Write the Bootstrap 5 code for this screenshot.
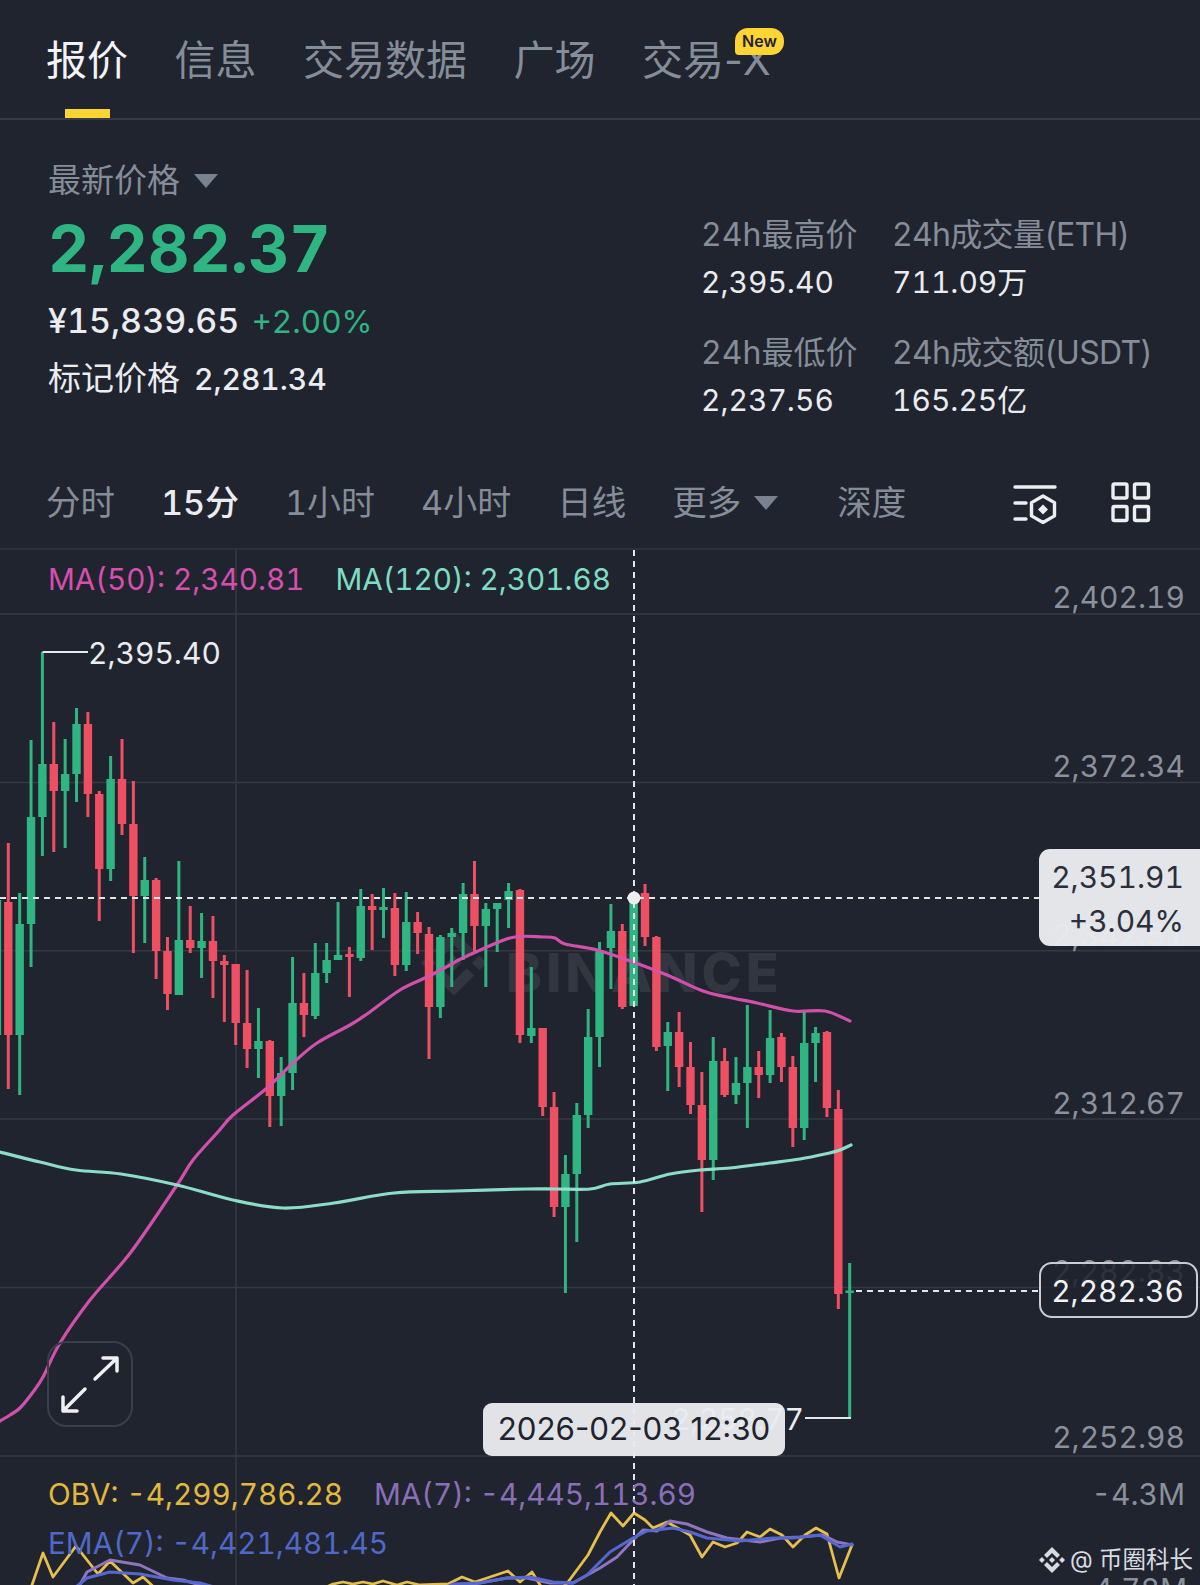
<!DOCTYPE html>
<html lang="zh-CN">
<head>
<meta charset="utf-8">
<title>ETH 报价</title>
<link href="https://cdn.jsdelivr.net/npm/bootstrap@5.3.0/dist/css/bootstrap.min.css" rel="stylesheet">
<style>
:root{--bgd:#20242e;--gr:#858d99;--wh:#eaecef;--up:#2fb582;--dn:#ef4f62;--yl:#fcd535;}
html,body{margin:0;background:var(--bgd);}
body{font-family:Inter,"Noto Sans CJK SC",sans-serif;color:var(--wh);font-variant-numeric:tabular-nums;}
.phone{width:1200px;height:1585px;overflow:hidden;background:var(--bgd);}
.tabbar{height:120px;padding-left:46px;gap:46.500px;border-bottom:2px solid #353a45;}
.tabitem{font-size:41px;line-height:48px;color:var(--gr);position:relative;margin-top:36px;height:48px;font-variant-numeric:normal;white-space:nowrap;}
.tabitem.on{color:#f2f3f5;}
.tabitem.on::after{content:"";position:absolute;left:19px;width:45px;height:9px;top:73px;background:var(--yl);}
.newtag{position:absolute;left:93px;top:-8px;width:49px;height:27px;border-radius:13px 13px 13px 4px;background:var(--yl);color:#1f232e;font-size:16px;font-weight:600;line-height:27px;text-align:center;}
.stats{height:337px;padding-left:48px;padding-right:40px;}
.lab{font-size:32px;line-height:40px;color:var(--gr);white-space:nowrap;}
.lab.big{font-size:33px;}
.lab.tight{letter-spacing:-.7px;}
.val{font-size:30px;line-height:40px;color:var(--wh);font-weight:400;margin-top:7px;}
.hero{font-size:64px;line-height:70px;font-weight:700;color:var(--up);margin-top:14px;}
.fiat{margin-top:17px;font-size:34px;line-height:40px;font-weight:500;white-space:nowrap;}
.pct{color:var(--up);font-weight:400;margin-left:12px;font-size:31.500px;}
.markline{margin-top:16px;font-size:33px;line-height:40px;white-space:nowrap;}
.markline .num{font-size:30px;font-weight:500;margin-left:14px;}
.caret{display:inline-block;width:0;height:0;border-left:12px solid transparent;border-right:12px solid transparent;border-top:14px solid #798290;margin-left:14px;vertical-align:4px;}
.rightbox{padding-top:95px;margin-left:auto;width:459px;}
.c1{width:191px;}
.gaprow{margin-top:31px;}
.frames{height:93px;padding-left:46px;padding-right:49px;gap:46px;border-bottom:2px solid #2c313b;font-size:34.500px;color:var(--gr);white-space:nowrap;}
.frames .on{color:var(--wh);font-weight:500;font-size:34px;}
.frames .dig{font-size:34px;}
.frames .more{margin-left:13px;}
.frames .caret{margin-left:13px;vertical-align:5px;}
.chartbox{position:relative;height:1035px;overflow:hidden;}
#plot{position:absolute;left:0;top:0;display:block;}
.legend{position:absolute;left:48px;font-size:29.700px;line-height:40px;white-space:nowrap;gap:31px;}
.pricetip{position:absolute;left:1039px;top:299px;width:175px;height:97px;background:rgba(233,235,238,.97);border-radius:11px;color:#2a2f3a;font-size:30px;line-height:44px;padding:6px 30px 0 0;text-align:right;}
.lasttip{position:absolute;left:1039px;top:712px;width:159px;height:56px;border:2px solid #c9cdd3;border-radius:13px;background:rgba(31,35,46,.86);color:#f1f2f4;font-size:30px;line-height:54px;text-align:right;padding-right:12px;}
.timetip{position:absolute;left:483px;top:853px;width:302px;height:53px;background:rgba(233,235,238,.96);border-radius:9px;color:#1f232e;font-size:31.300px;line-height:53px;text-align:center;white-space:nowrap;font-variant-numeric:normal;}
.zoombtn{position:absolute;left:47px;top:791px;width:86px;height:86px;border:2px solid #393f4a;border-radius:20px;}
.signoff{position:absolute;left:1039px;top:995px;font-size:23.500px;line-height:30px;color:#d8dbe0;gap:5px;white-space:nowrap;}
</style>
</head>
<body>
<div class="phone d-flex flex-column">
  <div class="tabbar d-flex flex-shrink-0">
    <div class="tabitem on">报价</div>
    <div class="tabitem">信息</div>
    <div class="tabitem">交易数据</div>
    <div class="tabitem">广场</div>
    <div class="tabitem">交易-X<span class="newtag">New</span></div>
  </div>

  <div class="stats d-flex flex-shrink-0">
    <div>
      <div class="lab big" style="margin-top:40px">最新价格<span class="caret"></span></div>
      <div class="hero">2,282.37</div>
      <div class="fiat">¥15,839.65<span class="pct">+2.00%</span></div>
      <div class="markline">标记价格<span class="num">2,281.34</span></div>
    </div>
    <div class="rightbox">
      <div class="d-flex">
        <div class="c1"><div class="lab">24h最高价</div><div class="val">2,395.40</div></div>
        <div><div class="lab tight">24h成交量(ETH)</div><div class="val">711.09万</div></div>
      </div>
      <div class="d-flex gaprow">
        <div class="c1"><div class="lab">24h最低价</div><div class="val">2,237.56</div></div>
        <div><div class="lab tight">24h成交额(USDT)</div><div class="val">165.25亿</div></div>
      </div>
    </div>
  </div>

  <div class="frames d-flex align-items-center flex-shrink-0">
    <div>分时</div>
    <div class="on">15分</div>
    <div class="dig">1小时</div>
    <div class="dig">4小时</div>
    <div>日线</div>
    <div>更多<span class="caret"></span></div>
    <div class="more">深度</div>
    <svg class="ms-auto" width="44" height="42" viewBox="1016 482 44 42" fill="none" stroke="#eceef0" stroke-width="3.4" stroke-linecap="round" stroke-linejoin="round">
      <path d="M1018 487H1058M1018 503H1029M1018 519H1029"/>
      <path d="M1046 496l11.5 6.6v13.3L1046 522.5l-11.500-6.600V502.600Z"/>
      <path d="M1046 504.500l5 5-5 5-5-5Z" fill="#eceef0" stroke="none"/>
    </svg>
    <svg class="ms-2" width="40" height="41" viewBox="1111.500 482.500 40 41" fill="none" stroke="#eceef0" stroke-width="3.400" stroke-linejoin="round">
      <rect x="1113.500" y="484.500" width="14" height="14" rx="1.500"/><rect x="1135" y="484.500" width="14" height="14" rx="1.500"/>
      <rect x="1113.500" y="507" width="14" height="14" rx="1.500"/><rect x="1135" y="507" width="14" height="14" rx="1.500"/>
    </svg>
  </div>

  <div class="chartbox flex-shrink-0">
    <svg id="plot" width="1200" height="1035" viewBox="0 550 1200 1035" xmlns="http://www.w3.org/2000/svg">
      <g stroke="#343944" stroke-width="1.500">
        <path d="M0 614H1200M0 782.400H1200M0 950.700H1200M0 1119H1200M0 1287.500H1200M0 1456H1200"/>
        <path d="M236 550V1585"/>
      </g>
      <g fill="#31363f">
        <g transform="translate(421 930) scale(.52)">
          <path d="M38.730 53.200L63.300 28.630l24.580 24.580 14.300-14.300L63.300 0 24.430 38.880l14.300 14.320zM0 63.310l14.300-14.300 14.300 14.300-14.300 14.300zM38.730 73.410L63.300 97.990l24.580-24.580 14.310 14.290-.01.010L63.300 126.600 24.430 87.740l-.02-.02 14.320-14.310zM97.990 63.310l14.300-14.300 14.310 14.300-14.310 14.300z"/>
          <path d="M77.830 63.300L63.300 48.780 48.790 63.290l14.510 14.530 14.530-14.520z"/>
        </g>
        <text x="506" y="992" font-family="Inter,sans-serif" font-weight="800" font-size="54" letter-spacing="4">BINANCE</text>
      </g>
      <g id="candles"></g>
      <g id="lines" fill="none" stroke-linejoin="round" stroke-linecap="round"></g>
      <g font-family="Inter,sans-serif" font-size="30" fill="#8a919c" text-anchor="end">
        <text x="1185" y="608">2,402.19</text>
        <text x="1185" y="777">2,372.34</text>
        <text x="1185" y="946">2,342.51</text>
        <text x="1185" y="1114">2,312.67</text>
        <text x="1185" y="1282">2,282.83</text>
        <text x="1185" y="1448">2,252.98</text>
        <text x="1185" y="1505">-4.3M</text>
        <text x="1187" y="1600">-4.78M</text>
      </g>
      <g font-family="Inter,sans-serif" font-size="30" fill="#eaecef">
        <text x="88" y="664">2,395.40</text>
        <text x="804" y="1430" text-anchor="end">2,258.77</text>
      </g>
      <g fill="none" stroke="#e4e6ea" stroke-width="2">
        <path d="M42.500 652H88M805 1418H851"/>
      </g>
      <g stroke="#e3e5e9" stroke-width="2" stroke-dasharray="6 5" fill="none">
        <path d="M0 898H1040"/>
        <path d="M634 550V1585"/>
        <path d="M856 1291H1040"/>
      </g>
      <circle cx="634" cy="898" r="6.500" fill="#eceef0"/>
    </svg>

    <div class="legend d-flex" style="top:9px">
      <span style="color:#d64fae">MA(50): 2,340.81</span>
      <span style="color:#7ddcc4">MA(120): 2,301.68</span>
    </div>
    <div class="legend d-flex" style="top:924px">
      <span style="color:#e3b83f">OBV: -4,299,786.28</span>
      <span style="color:#8a6fb8">MA(7): -4,445,113.69</span>
    </div>
    <div class="legend" style="top:973px;color:#5068c8">EMA(7): -4,421,481.45</div>

    <div class="pricetip">2,351.91<br>+3.04%</div>
    <div class="lasttip">2,282.36</div>
    <div class="timetip">2026-02-03 12:30</div>

    <div class="zoombtn">
      <svg width="82" height="82" viewBox="49 1344 82 82" fill="none" stroke="#eef0f2" stroke-width="3.500" stroke-linecap="round" stroke-linejoin="round" style="display:block">
        <path d="M95 1380L117 1359M103 1359H117V1372M85 1390L63 1412M63 1398V1412H77"/>
      </svg>
    </div>

    <div class="signoff d-flex align-items-center">
      <svg class="flex-shrink-0" width="26" height="26" viewBox="0 0 126.610 126.610" fill="#d8dbe0">
        <path d="M38.730 53.200L63.300 28.630l24.580 24.580 14.300-14.300L63.300 0 24.430 38.880l14.300 14.320zM0 63.310l14.300-14.300 14.300 14.300-14.300 14.300zM38.730 73.410L63.300 97.990l24.580-24.580 14.310 14.290-.01.010L63.300 126.600 24.430 87.740l-.02-.02 14.320-14.310zM97.990 63.310l14.300-14.300 14.310 14.300-14.310 14.300z"/>
        <path d="M77.830 63.300L63.300 48.780 48.790 63.290l14.510 14.530 14.530-14.520z"/>
      </svg>
      <span>@ 币圈科长</span>
    </div>
  </div>
</div>

<script>
(function(){
var U='#2fb582',D='#ef4f62',NS='http://www.w3.org/2000/svg';
/* i=-1 onward: colour, wick top, body top, body bottom, wick bottom */
var c=[
['u',900,900,1035,1101],['d',843,902,1035,1089],['u',893,924,1035,1095],['u',740,817,924,967],['u',652,764,817,856],
['d',722,764,791,852],['u',739,774,791,848],['u',708,724,774,802],['d',712,724,794,817],['d',791,794,869,921],
['u',756,779,869,881],['d',739,779,824,835],['d',781,824,896,953],['u',857,880,896,943],['d',878,880,951,979],
['d',937,951,994,1010],['u',861,940,995,995],['d',906,940,948,953],['u',913,941,948,978],['d',916,941,961,998],
['d',955,961,965,1022],['d',964,964,1023,1045],['d',970,1023,1049,1068],['u',1008,1041,1049,1078],['d',1040,1041,1096,1127],
['u',1057,1073,1096,1126],['u',957,1003,1073,1090],['d',973,1003,1015,1037],['u',943,973,1016,1019],['u',943,960,973,983],
['u',902,955,960,960],['d',947,954,957,997],['u',889,906,958,961],['d',894,906,910,950],['u',888,907,910,938],
['d',893,908,965,976],['u',892,922,965,971],['d',912,922,933,954],['d',927,934,1007,1059],['u',935,937,1007,1018],
['u',928,933,937,987],['u',883,894,933,960],['d',861,894,926,952],['u',903,909,926,987],['u',903,903,909,952],
['u',883,891,900,928],['d',889,890,1035,1043],['u',967,1028,1036,1043],['d',1028,1028,1107,1116],['d',1092,1107,1207,1217],
['u',1155,1174,1207,1293],['u',1103,1115,1174,1242],['u',1009,1037,1115,1128],['u',942,950,1037,1067],['u',904,931,948,989],
['d',924,931,1007,1009],['u',898,900,1006,1006],['d',884,893,937,946],['d',936,937,1047,1051],['u',1022,1032,1046,1091],
['d',1012,1032,1067,1087],['d',1042,1067,1105,1114],['d',1072,1105,1160,1212],['u',1037,1061,1160,1180],['d',1048,1061,1095,1097],
['u',1057,1083,1095,1104],['u',1005,1067,1083,1128],['d',1051,1067,1075,1098],['u',1010,1038,1075,1083],['d',1033,1037,1067,1082],
['d',1056,1067,1128,1147],['u',1012,1043,1128,1140],['u',1027,1033,1043,1082],['d',1031,1032,1108,1117],['d',1090,1109,1294,1309],
['u',1263,1290.500,1293,1418]
];
var g=document.getElementById('candles');
function el(n,a,p){var e=document.createElementNS(NS,n);for(var k in a)e.setAttribute(k,a[k]);p.appendChild(e);return e;}
c.forEach(function(r,idx){
  var i=idx-1,x=8.300+11.370*i,col=r[0]=='u'?U:D;
  el('rect',{x:x-1.500,y:r[1],width:3,height:r[4]-r[1],fill:col},g);
  el('rect',{x:x-4.200,y:r[2],width:8.400,height:Math.max(r[3]-r[2],2.500),fill:col},g);
});
var L=document.getElementById('lines');
function parse(a){return a.map(function(s){return s.split(',').map(Number);});}
function smooth(a){var p=parse(a),d='M'+p[0][0]+' '+p[0][1];
  for(var i=0;i<p.length-1;i++){var p0=p[i-1]||p[i],p1=p[i],p2=p[i+1],p3=p[i+2]||p2;
    d+='C'+(p1[0]+(p2[0]-p0[0])/6).toFixed(1)+' '+(p1[1]+(p2[1]-p0[1])/6).toFixed(1)+' '+(p2[0]-(p3[0]-p1[0])/6).toFixed(1)+' '+(p2[1]-(p3[1]-p1[1])/6).toFixed(1)+' '+p2[0]+' '+p2[1];}
  return d;}
function curve(a,col,w){el('path',{d:smooth(a),stroke:col,'stroke-width':w,opacity:.97},L);}
function line(a,col,w){el('polyline',{points:a.join(' '),stroke:col,'stroke-width':w},L);}
curve(['0,1421','10,1415','20,1408','33,1392','43,1377','60,1343','90,1300','131,1252','177,1185','193,1160','217,1133','233,1115','267,1088','293,1063','317,1043','350,1025','367,1014','400,990','427,977','450,965','463,958','510,938','543,937','555,938','565,944','597,950','633,962','667,975','703,991','727,997','757,1003','793,1011','825,1011','850,1021'],'#d652ae',3.200);
curve(['0,1152','40,1162','76,1170','121,1174','177,1185','233,1200','283,1208','334,1203','394,1193','455,1191','526,1189','555,1189','590,1189','610,1184','640,1182','670,1174','700,1170','730,1168','770,1163','800,1159','825,1154','840,1150','851,1145'],'#8fe3cc',3.200);
/* lower panel */
var obv=['32,1585','43,1553','53,1577','76,1546','98,1574','110,1561','133,1583','143,1577','157,1590','320,1590','333,1584','343,1582','353,1584','363,1582','373,1584','383,1581','397,1585','407,1582','420,1585','448,1584','462,1577','475,1582','508,1571','520,1582','532,1572','542,1588','560,1590','568,1582','588,1555','600,1532','611,1513','623,1526','634,1513','645,1520','653,1528','667,1522','690,1535','702,1557','713,1542','725,1547','737,1543','747,1532','760,1537','770,1529','782,1535','793,1547','805,1535','816,1528','827,1534','839,1578','852,1545'];
var ma7=['77,1590','87,1572','110,1560','140,1565','167,1578','183,1580','200,1585','215,1590','440,1590','507,1578','527,1578','550,1583','573,1583','600,1568','617,1557','633,1540','643,1530','657,1531','670,1521','687,1524','707,1532','727,1538','760,1542','780,1538','800,1537','823,1535','837,1542','852,1545'];
var ema=['72,1590','87,1578','110,1572','140,1574','173,1580','200,1583','225,1590','440,1590','453,1584','480,1583','507,1578','530,1577','553,1582','573,1583','587,1575','610,1552','633,1538','647,1531','673,1528','690,1532','707,1538','740,1541','773,1538','793,1538','820,1535','840,1547','852,1544'];
line(obv,'#e6bf4c',2.800);line(ma7,'#8e76bd',3);line(ema,'#5468d0',3);
})();
</script>
<script src="https://cdn.jsdelivr.net/npm/bootstrap@5.3.0/dist/js/bootstrap.bundle.min.js"></script>
</body>
</html>
